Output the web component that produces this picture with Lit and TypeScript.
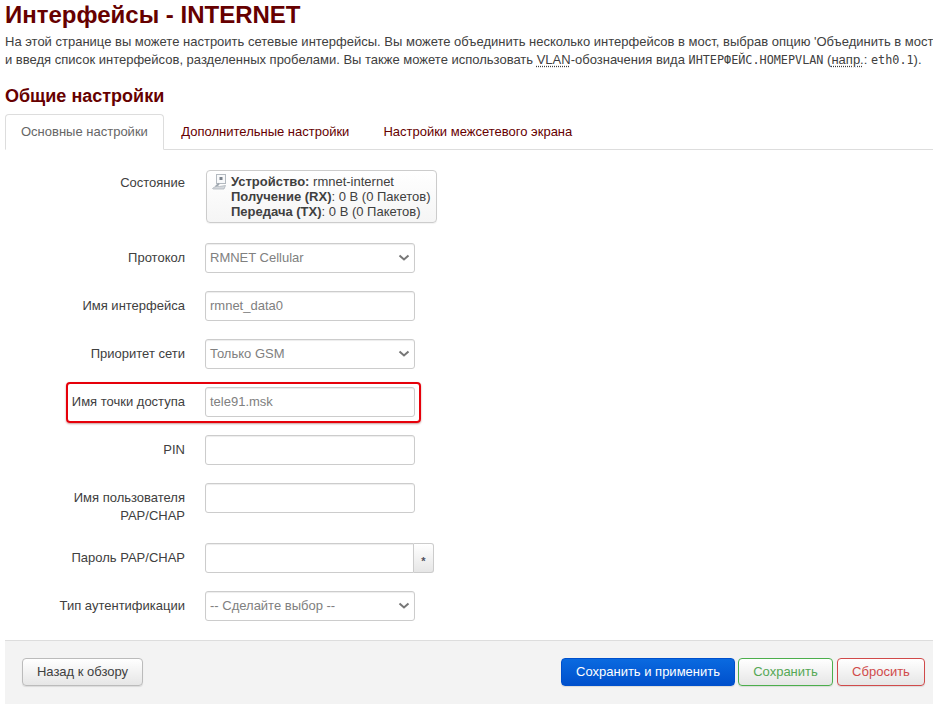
import { LitElement, html, css } from "lit";
import { customElement } from "lit/decorators.js";

const chevron = html`<svg class="chev" width="12" height="8" viewBox="0 0 12 8"><path d="M1.5 1.5 6 5.5l4.5-4" fill="none" stroke="#777" stroke-width="2"/></svg>`;

@customElement("app-root")
export class AppRoot extends LitElement {
  static styles = css`
    :host { display: block; width: 933px; height: 711px; overflow: hidden; background: #fff; font-family: "Liberation Sans", Arial, sans-serif; font-size: 13px; color: #404040; position: relative; }
    .page { padding: 0 0 0 5px; width: 928px; }
    h2 { margin: 0; font-size: 24px; line-height: 30px; font-weight: 700; color: #600; white-space: nowrap; }
    .desc { margin: 3px 0 0; line-height: 18px; height: 36px; white-space: nowrap; color: #404040; font-size: 13px; }
    abbr { text-decoration: underline dotted; text-underline-offset: 2px; }
    code { font-family: "DejaVu Sans Mono", monospace; font-size: 11.8px; }
    h3 { margin: 16px 0 0; font-size: 18px; line-height: 22px; font-weight: 700; color: #600; }
    .tabs { display: flex; margin-top: 7px; height: 36px; border-bottom: 1px solid #ddd; box-sizing: border-box; }
    .tab { padding: 0 16.5px; line-height: 36px; color: #600; white-space: nowrap; margin-right: 1px; }
    .tab.active { color: #666; border: 1px solid #ddd; border-bottom: 1px solid #fff; border-radius: 4px 4px 0 0; background: #fff; height: 36px; box-sizing: border-box; line-height: 34px; padding: 0 15px; }
    .form { padding-top: 20px; height: 490px; box-sizing: border-box; }
    .row { display: flex; margin-bottom: 18px; position: relative; }
    .row.first { margin-bottom: 19px; height: 54px; }
    .label { width: 180px; padding-top: 6px; text-align: right; line-height: 18px; margin-right: 20px; color: #404040; flex: none; }
    .first .label { padding-top: 4px; }
    .ctl { width: 210px; height: 30px; box-sizing: border-box; border: 1px solid #ccc; border-radius: 3px; background: #fff; box-shadow: inset 0 1px 1px rgba(0,0,0,.075); padding: 0 4px; line-height: 28px; color: #808080; display: flex; align-items: center; justify-content: space-between; flex: none; }
    .status { margin-left: 1px; width: 231px; height: 53px; box-sizing: border-box; border: 1px solid #ccc; border-radius: 4px; background: linear-gradient(#fff, #f5f5f5); box-shadow: 0 1px 1px rgba(0,0,0,.05); display: flex; padding: 3px 5px; line-height: 15px; color: #404040; white-space: nowrap; }
    .status svg { margin: -1px 3px 0 0; flex: none; }
    .pw { display: flex; }
    .pw .ctl { border-radius: 3px 0 0 3px; width: 209px; }
    .star { width: 20px; height: 30px; box-sizing: border-box; border: 1px solid #ccc; border-left: 0; border-radius: 0 3px 3px 0; background: linear-gradient(#fff, #e6e6e6); text-align: center; line-height: 34px; font-size: 11px; font-weight: 700; color: #505060; overflow: hidden; }
    .hl { position: absolute; left: 61px; top: -5px; width: 355px; height: 41px; box-sizing: border-box; border: 2px solid #e6000a; border-radius: 4px; box-shadow: 0 1px 2px rgba(120,0,0,.4); pointer-events: none; }
    .foot { height: 64px; box-sizing: border-box; border-top: 1px solid #ddd; background: #f3f3f3; padding: 17px 8px 0 17px; display: flex; justify-content: space-between; }
    .right { display: flex; gap: 3px; }
    .btn { height: 28px; box-sizing: border-box; border: 1px solid #bbb; border-radius: 4px; background: linear-gradient(#fff, #e6e6e6); line-height: 26px; text-align: center; color: #404040; box-shadow: 0 1px 1px rgba(0,0,0,.1); white-space: nowrap; }
    .back { width: 121px; }
    .apply { width: 174px; background: linear-gradient(#0a6ae0, #0050cc); border-color: #0050cc; color: #fff; }
    .save { width: 95px; border-color: #4cae4c; color: #55a855; }
    .reset { width: 88px; margin-left: 1px; border-color: #d04a4a; color: #d04a4a; }
  `;

  private row(label: unknown, ctl: unknown, extra: unknown = "", cls = "row") {
    return html`<div class=${cls}><div class="label">${label}</div>${ctl}${extra}</div>`;
  }

  render() {
    const sel = (t: string) => html`<div class="ctl"><span>${t}</span>${chevron}</div>`;
    const inp = (t = "") => html`<div class="ctl"><span>${t}</span></div>`;
    return html`<div class="page">
      <h2>Интерфейсы - INTERNET</h2>
      <p class="desc">На этой странице вы можете настроить сетевые интерфейсы. Вы можете объединить несколько интерфейсов в мост, выбрав опцию 'Объединить в мост<br />и введя список интерфейсов, разделенных пробелами. Вы также можете использовать <abbr>VLAN</abbr>-обозначения вида <code>ИНТЕРФЕЙС.НОМЕРVLAN</code> (<abbr>напр.</abbr>: <code>eth0.1</code>).</p>
      <h3>Общие настройки</h3>
      <div class="tabs">
        <div class="tab active">Основные настройки</div>
        <div class="tab">Дополнительные настройки</div>
        <div class="tab">Настройки межсетевого экрана</div>
      </div>
      <div class="form">
        ${this.row("Состояние", html`<div class="status">
          <svg width="16" height="18" viewBox="0 0 16 18"><rect x="4.5" y="1.5" width="9" height="9" fill="#f8f9fa" stroke="#b4bac0"/><rect x="7.5" y="4" width="3" height="3" fill="#7a828c"/><path d="M7 10.5 3.5 14" stroke="#a0a8b0" stroke-width="2"/><path d="M.5 15.5c2-2 5-2.500 7-2l6-1-1.500 3.500H1.500z" fill="#d4d8dc" stroke="#b0b6bc" stroke-width=".8"/></svg>
          <div><div><b>Устройство:</b> rmnet-internet</div><div><b>Получение (RX)</b>: 0 B (0 Пакетов)</div><div><b>Передача (TX)</b>: 0 B (0 Пакетов)</div></div>
        </div>`, "", "row first")}
        ${this.row("Протокол", sel("RMNET Cellular"))}
        ${this.row("Имя интерфейса", inp("rmnet_data0"))}
        ${this.row("Приоритет сети", sel("Только GSM"))}
        ${this.row("Имя точки доступа", inp("tele91.msk"), html`<div class="hl"></div>`)}
        ${this.row("PIN", inp())}
        ${this.row(html`Имя пользователя<br />PAP/CHAP`, inp())}
        ${this.row("Пароль PAP/CHAP", html`<div class="pw"><div class="ctl"></div><div class="star">*</div></div>`)}
        ${this.row("Тип аутентификации", sel("-- Сделайте выбор --"))}
      </div>
      <div class="foot">
        <div class="btn back">Назад к обзору</div>
        <div class="right">
          <div class="btn apply">Сохранить и применить</div>
          <div class="btn save">Сохранить</div>
          <div class="btn reset">Сбросить</div>
        </div>
      </div>
    </div>`;
  }
}
